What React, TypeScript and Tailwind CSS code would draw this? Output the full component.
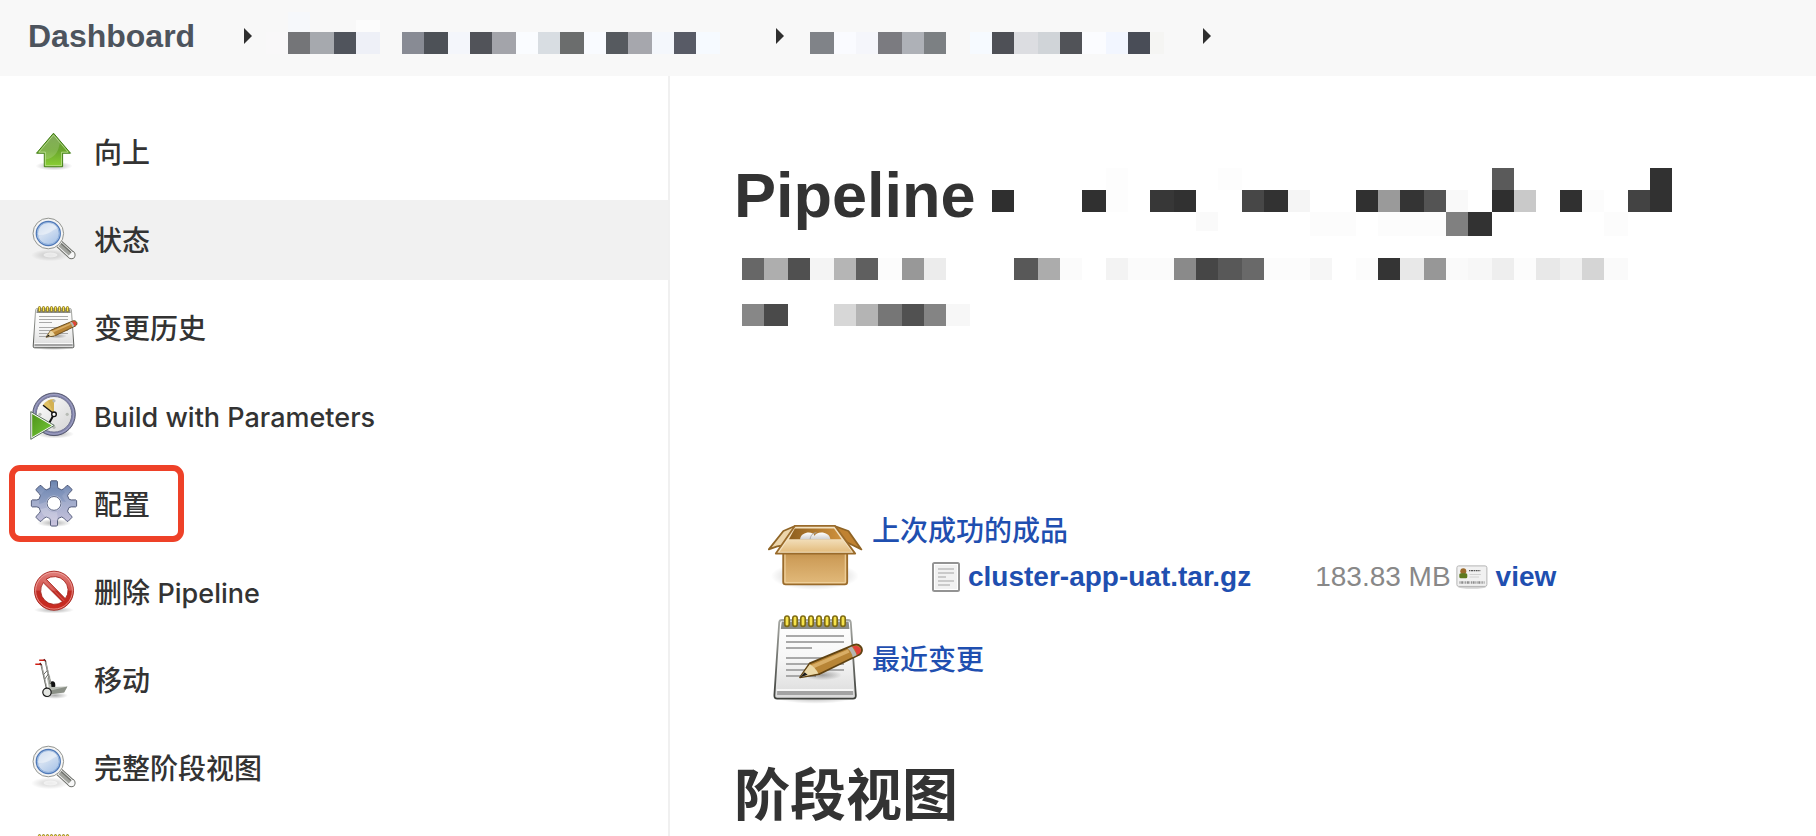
import React from 'react';

type Cell = [x: number, y: number, w: number, h: number, fill: string];

function Mosaic({ cells, x, y, w, h, className }: { cells: Cell[]; x: number; y: number; w: number; h: number; className: string }) {
  return (
    <svg className={className} width={w} height={h} viewBox={`${x} ${y} ${w} ${h}`} shapeRendering="crispEdges" aria-hidden="true">
      {cells.map(([cx, cy, cw, ch, fill]) => (
        <rect key={`${cx}-${cy}`} x={cx} y={cy} width={cw} height={ch} fill={fill} />
      ))}
    </svg>
  );
}

const folderCells: Cell[] = [
  [288, 12, 22, 20, '#f6f8fb'],
  [356, 20, 24, 12, '#fcfcfc'],
  [266, 32, 22, 22, '#f9f8f9'],
  [288, 32, 22, 22, '#747578'],
  [310, 32, 24, 22, '#a6a9ae'],
  [334, 32, 22, 22, '#50545c'],
  [356, 32, 24, 22, '#eef0f7'],
  [402, 32, 22, 22, '#888b94'],
  [424, 32, 24, 22, '#4d5157'],
  [448, 32, 22, 22, '#f4f6fb'],
  [470, 32, 22, 22, '#515359'],
  [492, 32, 24, 22, '#a3a4aa'],
  [516, 32, 22, 22, '#fafcff'],
  [538, 32, 22, 22, '#d8dde2'],
  [560, 32, 24, 22, '#6b6d6d'],
  [584, 32, 22, 22, '#f9fbff'],
  [606, 32, 22, 22, '#565a5f'],
  [628, 32, 24, 22, '#a6a7ad'],
  [652, 32, 22, 22, '#f4f7fc'],
  [674, 32, 22, 22, '#585b66'],
  [696, 32, 24, 22, '#f6faff'],
];

const jobCells: Cell[] = [
  [810, 32, 24, 22, '#808388'],
  [834, 32, 22, 22, '#fafbff'],
  [856, 32, 22, 22, '#f5f6fb'],
  [878, 32, 24, 22, '#7b7b80'],
  [902, 32, 22, 22, '#aeb1b7'],
  [924, 32, 22, 22, '#7c8083'],
  [970, 32, 22, 22, '#f6faff'],
  [992, 32, 22, 22, '#4e5056'],
  [1014, 32, 24, 22, '#dcdde1'],
  [1038, 32, 22, 22, '#d0d4d8'],
  [1060, 32, 22, 22, '#515358'],
  [1082, 32, 24, 22, '#fbfcff'],
  [1106, 32, 22, 22, '#f2f6ff'],
  [1128, 32, 22, 22, '#494d57'],
  [1150, 32, 14, 22, '#f5f5f3'],
];

const titleCells: Cell[] = [
  [992, 190, 22, 22, '#2f2f2f'],
  [1106, 168, 22, 44, '#fdfdfd'],
  [1082, 190, 24, 22, '#303030'],
  [1150, 190, 24, 22, '#373737'],
  [1174, 190, 22, 22, '#313131'],
  [1196, 212, 22, 19, '#fafafa'],
  [1218, 168, 24, 22, '#fdfdfd'],
  [1242, 190, 22, 22, '#474747'],
  [1264, 190, 24, 22, '#323232'],
  [1288, 190, 22, 22, '#f5f5f5'],
  [1310, 212, 46, 24, '#fcfcfc'],
  [1356, 190, 22, 22, '#303030'],
  [1378, 190, 22, 22, '#9a9a9a'],
  [1400, 190, 24, 22, '#343434'],
  [1424, 190, 22, 22, '#545454'],
  [1446, 190, 22, 22, '#f9f9f9'],
  [1378, 212, 68, 24, '#fcfcfc'],
  [1446, 212, 22, 24, '#808080'],
  [1468, 212, 24, 24, '#323232'],
  [1492, 168, 22, 22, '#5a5a5a'],
  [1492, 190, 22, 22, '#2f2f2f'],
  [1514, 190, 22, 22, '#c9c9c9'],
  [1560, 190, 22, 22, '#303030'],
  [1582, 190, 22, 22, '#fcfcfc'],
  [1604, 212, 24, 24, '#fcfcfc'],
  [1628, 190, 22, 22, '#434343'],
  [1650, 168, 22, 44, '#313131'],
];

const descriptionCells: Cell[] = [
  [742, 258, 22, 22, '#676767'],
  [764, 258, 24, 22, '#aeaeae'],
  [788, 258, 22, 22, '#505050'],
  [810, 258, 24, 22, '#f4f4f4'],
  [834, 258, 22, 22, '#b5b5b5'],
  [856, 258, 22, 22, '#5f5f5f'],
  [878, 258, 24, 22, '#fcfcfc'],
  [902, 258, 22, 22, '#989898'],
  [924, 258, 22, 22, '#ececec'],
  [1014, 258, 24, 22, '#585858'],
  [1038, 258, 22, 22, '#acacac'],
  [1060, 258, 22, 22, '#fbfbfb'],
  [1106, 258, 22, 22, '#f3f3f3'],
  [1128, 258, 46, 22, '#fbfbfb'],
  [1174, 258, 22, 22, '#8a8a8a'],
  [1196, 258, 22, 22, '#464646'],
  [1218, 258, 24, 22, '#585858'],
  [1242, 258, 22, 22, '#696969'],
  [1264, 258, 46, 22, '#fcfcfc'],
  [1310, 258, 22, 22, '#f6f6f6'],
  [1356, 258, 22, 22, '#fcfcfc'],
  [1378, 258, 22, 22, '#343434'],
  [1400, 258, 24, 22, '#e8e8e8'],
  [1424, 258, 22, 22, '#979797'],
  [1446, 258, 22, 22, '#fafafa'],
  [1468, 258, 24, 22, '#f7f7f7'],
  [1492, 258, 22, 22, '#eeeeee'],
  [1514, 258, 22, 22, '#fcfcfc'],
  [1536, 258, 24, 22, '#e8e8e8'],
  [1560, 258, 22, 22, '#f0f0f0'],
  [1582, 258, 22, 22, '#d5d5d5'],
  [1604, 258, 24, 22, '#fafafa'],
  [742, 304, 22, 22, '#878787'],
  [764, 304, 24, 22, '#4a4a4a'],
  [834, 304, 22, 22, '#d7d7d7'],
  [856, 304, 22, 22, '#b4b4b4'],
  [878, 304, 24, 22, '#767676'],
  [902, 304, 22, 22, '#515151'],
  [924, 304, 22, 22, '#848484'],
  [946, 304, 24, 22, '#f7f7f7'],
];

function Defs() {
  return (
    <svg className="absolute size-0" aria-hidden="true">
      <defs>
        <radialGradient id="shadow">
          <stop offset="0" stopColor="#000" stopOpacity="0.32" />
          <stop offset="0.5" stopColor="#000" stopOpacity="0.16" />
          <stop offset="1" stopColor="#000" stopOpacity="0" />
        </radialGradient>
        <linearGradient id="arrow" x1="0" y1="0" x2="0" y2="1">
          <stop offset="0" stopColor="#6a9a3c" />
          <stop offset="0.5" stopColor="#69a52c" />
          <stop offset="1" stopColor="#8bd035" />
        </linearGradient>
        <linearGradient id="lens" x1="0" y1="0" x2="0.7" y2="1">
          <stop offset="0" stopColor="#a9c1e2" />
          <stop offset="0.5" stopColor="#d3e0f1" />
          <stop offset="1" stopColor="#a9c4e8" />
        </linearGradient>
        <linearGradient id="paper" x1="0" y1="0" x2="0" y2="1">
          <stop offset="0" stopColor="#ffffff" />
          <stop offset="0.5" stopColor="#f6f6f6" />
          <stop offset="1" stopColor="#dadada" />
        </linearGradient>
        <linearGradient id="paperEdge" x1="0" y1="0" x2="0" y2="1">
          <stop offset="0" stopColor="#a5a7a2" />
          <stop offset="1" stopColor="#3e403c" />
        </linearGradient>
        <linearGradient id="dial" x1="0" y1="0" x2="1" y2="1">
          <stop offset="0" stopColor="#ffffff" />
          <stop offset="1" stopColor="#d4d4d4" />
        </linearGradient>
        <linearGradient id="play" x1="0" y1="0" x2="1" y2="1">
          <stop offset="0" stopColor="#4f9419" />
          <stop offset="1" stopColor="#74c93a" />
        </linearGradient>
        <linearGradient id="gear" x1="0" y1="0" x2="0" y2="1">
          <stop offset="0" stopColor="#6a84b0" />
          <stop offset="0.45" stopColor="#a0abcb" />
          <stop offset="1" stopColor="#cbc4de" />
        </linearGradient>
        <linearGradient id="stop" x1="0" y1="0" x2="0" y2="1">
          <stop offset="0" stopColor="#e0807c" />
          <stop offset="0.48" stopColor="#d2504a" />
          <stop offset="0.52" stopColor="#bf2a22" />
          <stop offset="1" stopColor="#cc2c22" />
        </linearGradient>
        <linearGradient id="boxFront" x1="0" y1="0" x2="0" y2="1">
          <stop offset="0" stopColor="#b88741" />
          <stop offset="0.35" stopColor="#cf9f5b" />
          <stop offset="1" stopColor="#e2ba7b" />
        </linearGradient>
        <linearGradient id="boxFlap" x1="0" y1="0" x2="0" y2="1">
          <stop offset="0" stopColor="#f2deb9" />
          <stop offset="1" stopColor="#e4bd7f" />
        </linearGradient>
        <linearGradient id="boxInner" x1="0" y1="0" x2="1" y2="0">
          <stop offset="0" stopColor="#8e5f1e" />
          <stop offset="1" stopColor="#d0923e" />
        </linearGradient>
        <linearGradient id="ball" x1="0" y1="0" x2="0" y2="1">
          <stop offset="0" stopColor="#ffffff" />
          <stop offset="1" stopColor="#cfcfcf" />
        </linearGradient>
      </defs>
    </svg>
  );
}

function Icon({ className, children }: { className: string; children: React.ReactNode }) {
  return (
    <svg className={className} viewBox="0 0 48 48" aria-hidden="true">
      {children}
    </svg>
  );
}

function UpIcon() {
  return (
    <Icon className="size-12 shrink-0">
      <ellipse cx="24" cy="38" rx="18.5" ry="4.5" fill="url(#shadow)" />
      <path d="M23.5 5.2 6.5 25.2H14.3V38.7H32.6V25.2H40.5Z" fill="url(#arrow)" stroke="#3c7a10" strokeLinejoin="round" />
      <path d="M23.5 6.9 8.8 24.2H15.3V37.7H31.6V24.2H38.2Z" fill="none" stroke="#c5e59e" strokeOpacity="0.75" />
      <path d="M23.5 7 8.9 24.2h6.4v7.3c8-1 13-6 14.6-17Z" fill="#fff" opacity="0.16" />
    </Icon>
  );
}

function SearchIcon() {
  return (
    <Icon className="size-12 shrink-0">
      <ellipse cx="20" cy="39.2" rx="19" ry="6" fill="url(#shadow)" opacity="0.6" />
      <ellipse cx="20.5" cy="39" rx="7" ry="2.6" fill="#fff" opacity="0.6" />
      <path d="M29.3 28 41.4 39" stroke="#6e706b" strokeWidth="8.4" />
      <circle cx="41.4" cy="39" r="4.2" fill="#6e706b" />
      <path d="M29.3 28 41.4 39" stroke="#f5f5f5" strokeWidth="6.4" />
      <circle cx="41.4" cy="39" r="3.2" fill="#f8f8f8" />
      <path d="M30 28.6 40.2 38" stroke="#a1a39e" strokeWidth="4.4" />
      <path d="m31.2 27.4 9.8 9" stroke="#70726d" strokeWidth="1.4" />
      <circle cx="18.3" cy="17.5" r="15.3" fill="#f4f4f4" stroke="#888a85" strokeWidth="0.9" />
      <circle cx="18.3" cy="17.5" r="12" fill="url(#lens)" stroke="#4f79b8" strokeWidth="1.3" />
      <circle cx="18.3" cy="17.5" r="10.9" fill="none" stroke="#8fb0dc" strokeWidth="1" />
      <path d="M8.4 19C8 11 12 7.2 18.5 7.1c5 0 8 2.2 9.3 5.4C23 12.5 20.5 19.5 8.4 19Z" fill="#fff" opacity="0.4" />
    </Icon>
  );
}

function NotepadIcon({ className }: { className: string }) {
  const rings = [9.5, 13.5, 17.5, 21.5, 25.5, 29.5, 33.5, 37.5];
  return (
    <Icon className={className}>
      <ellipse cx="23.5" cy="43" rx="20" ry="3.4" fill="url(#shadow)" />
      <path d="M7 4.5H40Q41.3 4.5 41.4 5.8L43.9 42.2Q44 43.8 42.5 43.8H4.6Q3.1 43.8 3.2 42.2L5.6 5.8Q5.700 4.5 7 4.5Z" fill="url(#paper)" stroke="url(#paperEdge)" strokeWidth="0.9" />
      <path d="M6.9 5.2H40.3L40.7 9H6.4Z" fill="#8b8c87" />
      <path d="M4.3 39.5H42.7" stroke="#fff" strokeWidth="0.8" />
      <path d="M4.6 40H42.5L42.6 42H4.5Z" fill="#a3a3a3" />
      <path d="M9 12.5H38M9 15.5H38M9 18.5H22M9 23.5H38M9 26.5H38M9 29.5H38M9 32.5H24" stroke="#a9a9a9" strokeWidth="1" />
      {rings.map((x) => (
        <rect key={x} x={x - 1.1} y="2.5" width="2.2" height="5.2" rx="1.1" fill="#f7e34c" stroke="#7d6a14" strokeWidth="0.8" />
      ))}
      <ellipse cx="27" cy="32" rx="10" ry="2.6" fill="url(#shadow)" />
      <path d="M16 33.2 20.8 26.2 43 16.9C45.5 16 48 18.6 46.500 21L45.6 21.9 25.5 31.6Z" fill="#b88536" stroke="#5f4212" strokeWidth="0.9" strokeLinejoin="round" />
      <path d="M21.2 27.2 40 19.2 40.7 20.8 22.9 28.6Z" fill="#d9ae66" />
      <path d="M16.3 33 20.9 26.6Q23.5 28 25.2 31.3Z" fill="#ecd9a8" />
      <path d="M16 33.2 18.3 30.6 19.800 31.900Z" fill="#1c1c1c" />
      <path d="M39.8 18.8 42 17.8 44.5 22 42.3 23.1Q42 20.5 39.8 18.8Z" fill="#b6b6b4" />
      <path d="M42 17.800C44.500 16.800 47.200 18.300 46.200 20.600Q46 21.300 44.300 22Q44 19.500 42 17.800Z" fill="#e2403a" />
    </Icon>
  );
}

function ClockIcon() {
  return (
    <Icon className="size-12 shrink-0">
      <ellipse cx="25" cy="42" rx="19" ry="4.5" fill="url(#shadow)" />
      <circle cx="24" cy="22.3" r="21.3" fill="#8284ad" stroke="#4b4d62" strokeWidth="0.9" />
      <circle cx="24" cy="22.3" r="19.8" fill="none" stroke="#a9abc9" strokeWidth="0.8" />
      <circle cx="24" cy="22.3" r="17.8" fill="url(#dial)" stroke="#6c6e8c" strokeWidth="0.9" />
      <path d="M24 22.3 13 13Q17 7 24 7.3Z" fill="#e0c063" />
      <path d="M24 22.3 18 8.6Q21 7.2 24 7.3Z" fill="#c9a749" opacity="0.6" />
      {[[24, 8.8], [37.2, 22.3], [10, 22.3], [24, 35.3]].map(([x, y]) => (
        <circle key={`${x}-${y}`} cx={x} cy={y} r="1.6" fill="#b7bbb5" />
      ))}
      <path d="M23 21 13 13.2" stroke="#111" strokeWidth="1.4" />
      <path d="M23.3 23.5 19.5 30.5" stroke="#111" strokeWidth="2" />
      <circle cx="24" cy="22.3" r="2.3" fill="#fff" stroke="#111" strokeWidth="1.4" />
      <path d="M0.8 19.6V47.3L24.3 33.4Z" fill="#fff" stroke="#47604a" strokeWidth="0.9" strokeLinejoin="round" />
      <path d="M2.2 22V45L21.7 33.4Z" fill="url(#play)" />
    </Icon>
  );
}

const gearPoints = Array.from({ length: 8 }, (_, i) => {
  const a = (i * Math.PI) / 4;
  const profile = [
    [-0.27, 15.6],
    [-0.2, 17.6],
    [-0.16, 22],
    [-0.12, 22.8],
    [0.12, 22.8],
    [0.16, 22],
    [0.2, 17.6],
    [0.27, 15.6],
  ];
  return profile.map(([da, r]) => `${(24 + r * Math.sin(a + da)).toFixed(2)},${(23.4 - r * Math.cos(a + da)).toFixed(2)}`).join(' ');
}).join(' ');

function GearIcon() {
  return (
    <Icon className="size-12 shrink-0">
      <ellipse cx="24" cy="43" rx="17" ry="4" fill="url(#shadow)" />
      <polygon points={gearPoints} fill="url(#gear)" stroke="#47506f" strokeWidth="0.9" strokeLinejoin="round" />
      <path d="M13 12c6-6 16-6 22 0l-3 4 4 6c-5-1-7-1-9-4-3-2-6 0-8 4-3-1-7 2-10 2 0-4 1-9 4-12Z" fill="#5c78a8" opacity="0.25" />
      <path d="M10 29c4 0 5-2 7-1 2 4 6 5 10 4l1 8c-8 1-15-3-18-11Z" fill="#fff" opacity="0.2" />
      <circle cx="24" cy="23.4" r="7.9" fill="#d3d8e8" opacity="0.7" />
      <circle cx="24" cy="23.4" r="6.9" fill="#fff" stroke="#555e7e" strokeWidth="0.9" />
    </Icon>
  );
}

function StopIcon() {
  return (
    <Icon className="size-12 shrink-0">
      <ellipse cx="24" cy="42" rx="20" ry="3.4" fill="url(#shadow)" />
      <path
        fillRule="evenodd"
        d="M24 3.2a19.5 19.5 0 1 1 0 39a19.5 19.5 0 1 1 0-39ZM13.2 14.6a13.8 13.8 0 0 0 19.3 19.2ZM16.2 11.2 35.3 30.7A13.8 13.8 0 0 0 16.2 11.2Z"
        fill="url(#stop)"
        stroke="#a5221c"
        strokeWidth="0.9"
      />
      <circle cx="24" cy="22.7" r="18.4" fill="none" stroke="#f2b0aa" strokeWidth="0.9" opacity="0.8" />
      <path d="M14.2 12.5 34.2 32.9" stroke="#ee9d97" strokeWidth="0.7" opacity="0.7" />
    </Icon>
  );
}

function DollyIcon() {
  return (
    <Icon className="size-12 shrink-0">
      <ellipse cx="25" cy="39.5" rx="13" ry="3.4" fill="url(#shadow)" />
      <ellipse cx="22.5" cy="29.5" rx="2.8" ry="4.2" fill="#111" />
      <path d="M17 22 20 19.500 21.500 31 37.4 30.5 34 36.2 20 38Z" fill="#b9bdb5" />
      <path d="M21 34.5 37.4 30.5 34.2 36.4 21 38.2Z" fill="#8b9087" />
      <path d="M11.2 8.5 16.5 32M15.4 5 20.5 28" stroke="#55574f" strokeWidth="1.5" fill="none" />
      <path d="M11.6 9.5 16.7 31M15.800 6 20.300 27" stroke="#e8e8e8" strokeWidth="0.6" />
      <path d="M13.500 18.500 17.300 14.500M14.700 23 18.500 18" stroke="#55574f" strokeWidth="0.9" />
      <path d="M9.2 4.3H14.5M5.3 8.2H10.6" stroke="#cf1f14" strokeWidth="1.5" />
      <path d="M13.8 3.2 15.7 5M9.8 7 11.5 9" stroke="#611" strokeWidth="1.2" />
      <circle cx="17" cy="36.3" r="4.2" fill="#e4e6e2" stroke="#151515" strokeWidth="1.2" />
    </Icon>
  );
}

function PackageIcon() {
  return (
    <Icon className="size-24 shrink-0">
      <ellipse cx="23.4" cy="34.5" rx="22" ry="7" fill="url(#shadow)" />
      <path d="M13.5 9.5 7.7 12 .4 21.2 4.6 19.7 9 19 14.5 10Z" fill="#ecd5ab" stroke="#8f6425" strokeWidth="0.9" strokeLinejoin="round" />
      <path d="M33.3 9.5 40.2 12 46.7 21.2 42.2 19 38 17Z" fill="#c08231" stroke="#8f6425" strokeWidth="0.9" strokeLinejoin="round" />
      <rect x="7.6" y="20" width="32" height="18.7" rx="1.2" fill="url(#boxFront)" stroke="#9a6b2b" strokeWidth="0.9" />
      <rect x="8.5" y="21" width="30.2" height="16.8" rx="0.6" fill="none" stroke="#f3d9a8" strokeWidth="0.7" opacity="0.7" />
      <path d="M13.5 9.4H33.4L43.6 23.3H3.9Z" fill="#f3e2c2" stroke="#9a6b2b" strokeWidth="0.9" strokeLinejoin="round" />
      <path d="M13.4 10.8H33L36.9 16.2H10.4Z" fill="url(#boxInner)" />
      <path d="M16 16.2C16.5 12 23 12 23.3 14.5C24 12 30.8 12 31.2 16.2Z" fill="url(#ball)" />
      <path d="M21 16.2C21.5 13.7 22.5 13 24.2 12.9" stroke="#a9a9a9" strokeWidth="0.5" fill="none" />
      <path d="M10 16.2H37.3L41.8 22.4H5.8Z" fill="url(#boxFlap)" />
    </Icon>
  );
}

function FileIcon() {
  return (
    <svg className="h-[30px] w-7 shrink-0" viewBox="0 0 28 30" aria-hidden="true">
      <rect x="1" y="1" width="26" height="28" rx="1.5" fill="#f1f1f1" stroke="#939393" strokeWidth="2" />
      <rect x="2.5" y="2.5" width="23" height="25" fill="none" stroke="#fff" />
      <path d="M6 7H22M6 11H22M6 15H14M6 19H22M6 23H18" stroke="#cacaca" strokeWidth="2" />
    </svg>
  );
}

function FingerprintIcon() {
  return (
    <svg className="h-6 w-8 shrink-0" viewBox="0 0 32 24" aria-hidden="true">
      <ellipse cx="16" cy="22" rx="14" ry="1.8" fill="#000" opacity="0.18" />
      <rect x="0.9" y="0.9" width="30" height="20.5" rx="1.8" fill="#f1f1f1" stroke="#b4b4b4" />
      <circle cx="7.3" cy="6.2" r="3" fill="#9a6a2c" />
      <rect x="3.3" y="8.3" width="8" height="5" rx="1.5" fill="#5d7a1f" />
      <path d="M13 5.6H24.5" stroke="#555" strokeWidth="1.4" strokeDasharray="1.4 0.6 2 0.6" />
      <path d="M13.5 9.5H25M13.5 12H23" stroke="#d2d2d2" strokeWidth="1" />
      <path d="M3.5 17.5H28.5" stroke="#8c8c8c" strokeWidth="2.6" strokeDasharray="1 0.7 2 0.6 0.6 0.8" />
    </svg>
  );
}

function Crumb() {
  return (
    <svg className="h-4 w-2 shrink-0" viewBox="0 0 8 16" aria-hidden="true">
      <path d="M0 0 8 8 0 16Z" fill="#2f2f2f" />
    </svg>
  );
}

const tasks = [
  { label: '向上', icon: <UpIcon /> },
  { label: '状态', icon: <SearchIcon />, active: true },
  { label: '变更历史', icon: <NotepadIcon className="size-12 shrink-0" /> },
  { latin: 'Build with Parameters', icon: <ClockIcon /> },
  { label: '配置', icon: <GearIcon />, marked: true },
  { label: '删除 ', latin: 'Pipeline', icon: <StopIcon /> },
  { label: '移动', icon: <DollyIcon /> },
  { label: '完整阶段视图', icon: <SearchIcon /> },
  { icon: <NotepadIcon className="size-12 shrink-0" /> },
];

export default function App() {
  return (
    <div className="flex h-screen flex-col overflow-hidden bg-white font-['Liberation_Sans','Noto_Sans_CJK_SC',sans-serif] text-[28px] text-[#333]">
      <Defs />
      <header className="flex h-[76px] shrink-0 items-center bg-[#f8f8f8] pb-1 pl-7">
        <a href="#dashboard" className="w-[216px] text-[32px] leading-10 font-bold text-[#4d545d]">
          Dashboard
        </a>
        <Crumb />
        <Mosaic className="ml-[14px] shrink-0" cells={folderCells} x={266} y={8} w={454} h={56} />
        <span className="w-14" />
        <Crumb />
        <Mosaic className="ml-[26px] shrink-0" cells={jobCells} x={810} y={8} w={355} h={56} />
        <span className="w-[38px]" />
        <Crumb />
      </header>

      <div className="flex min-h-0 flex-1">
        <aside className="w-[670px] shrink-0 border-r-2 border-[#f0f0f0] pt-9">
          <nav className="flex flex-col gap-2 font-[Inter,'Noto_Sans_CJK_SC',sans-serif] font-medium">
            {tasks.map((task, i) => (
              <a
                key={i}
                href="#task"
                className={
                  task.active
                    ? 'relative flex h-20 shrink-0 items-center gap-4 bg-[#f1f1f1] pl-[30px]'
                    : 'relative flex h-20 shrink-0 items-center gap-4 pl-[30px]'
                }
              >
                {task.icon}
                <span className="pt-0.5">
                  {task.label}
                  {task.latin && <span className="text-[27px]">{task.latin}</span>}
                </span>
                {task.marked && <span className="absolute top-px left-[9px] h-[77px] w-[175px] rounded-[11px] border-6 border-[#ee4128]" />}
              </a>
            ))}
          </nav>
        </aside>

        <main className="min-w-0 flex-1 pt-[92px] pl-16">
          <h1 className="flex items-start gap-4 text-[63px] leading-[54px] font-bold">
            Pipeline
            <Mosaic className="shrink-0" cells={titleCells} x={992} y={168} w={680} h={68} />
          </h1>
          <Mosaic className="mt-[22px] ml-2" cells={descriptionCells} x={742} y={258} w={886} h={68} />

          <section className="mt-[181px] flex flex-col gap-2 pl-[34px] text-[#1f4fb0]">
            <div className="flex gap-2">
              <PackageIcon />
              <div>
                <a href="#artifacts" className="block pt-[5px] leading-10 font-medium">
                  上次成功的成品
                </a>
                <table className="ml-[60px] leading-[50px]">
                  <tbody>
                    <tr>
                      <td className="pr-2">
                        <FileIcon />
                      </td>
                      <td className="pr-16 font-bold">
                        <a href="#file">cluster-app-uat.tar.gz</a>
                      </td>
                      <td className="pr-[5px] text-[#888]">183.83 MB</td>
                      <td className="pr-2">
                        <FingerprintIcon />
                      </td>
                      <td className="font-bold">
                        <a href="#view">view</a>
                      </td>
                    </tr>
                  </tbody>
                </table>
              </div>
            </div>
            <div className="flex items-center gap-2">
              <NotepadIcon className="size-24 shrink-0" />
              <a href="#changes" className="pt-1 font-medium">
                最近变更
              </a>
            </div>
          </section>

          <h2 className="mt-[57px] text-[56px] leading-[64px] font-bold">阶段视图</h2>
        </main>
      </div>
    </div>
  );
}
